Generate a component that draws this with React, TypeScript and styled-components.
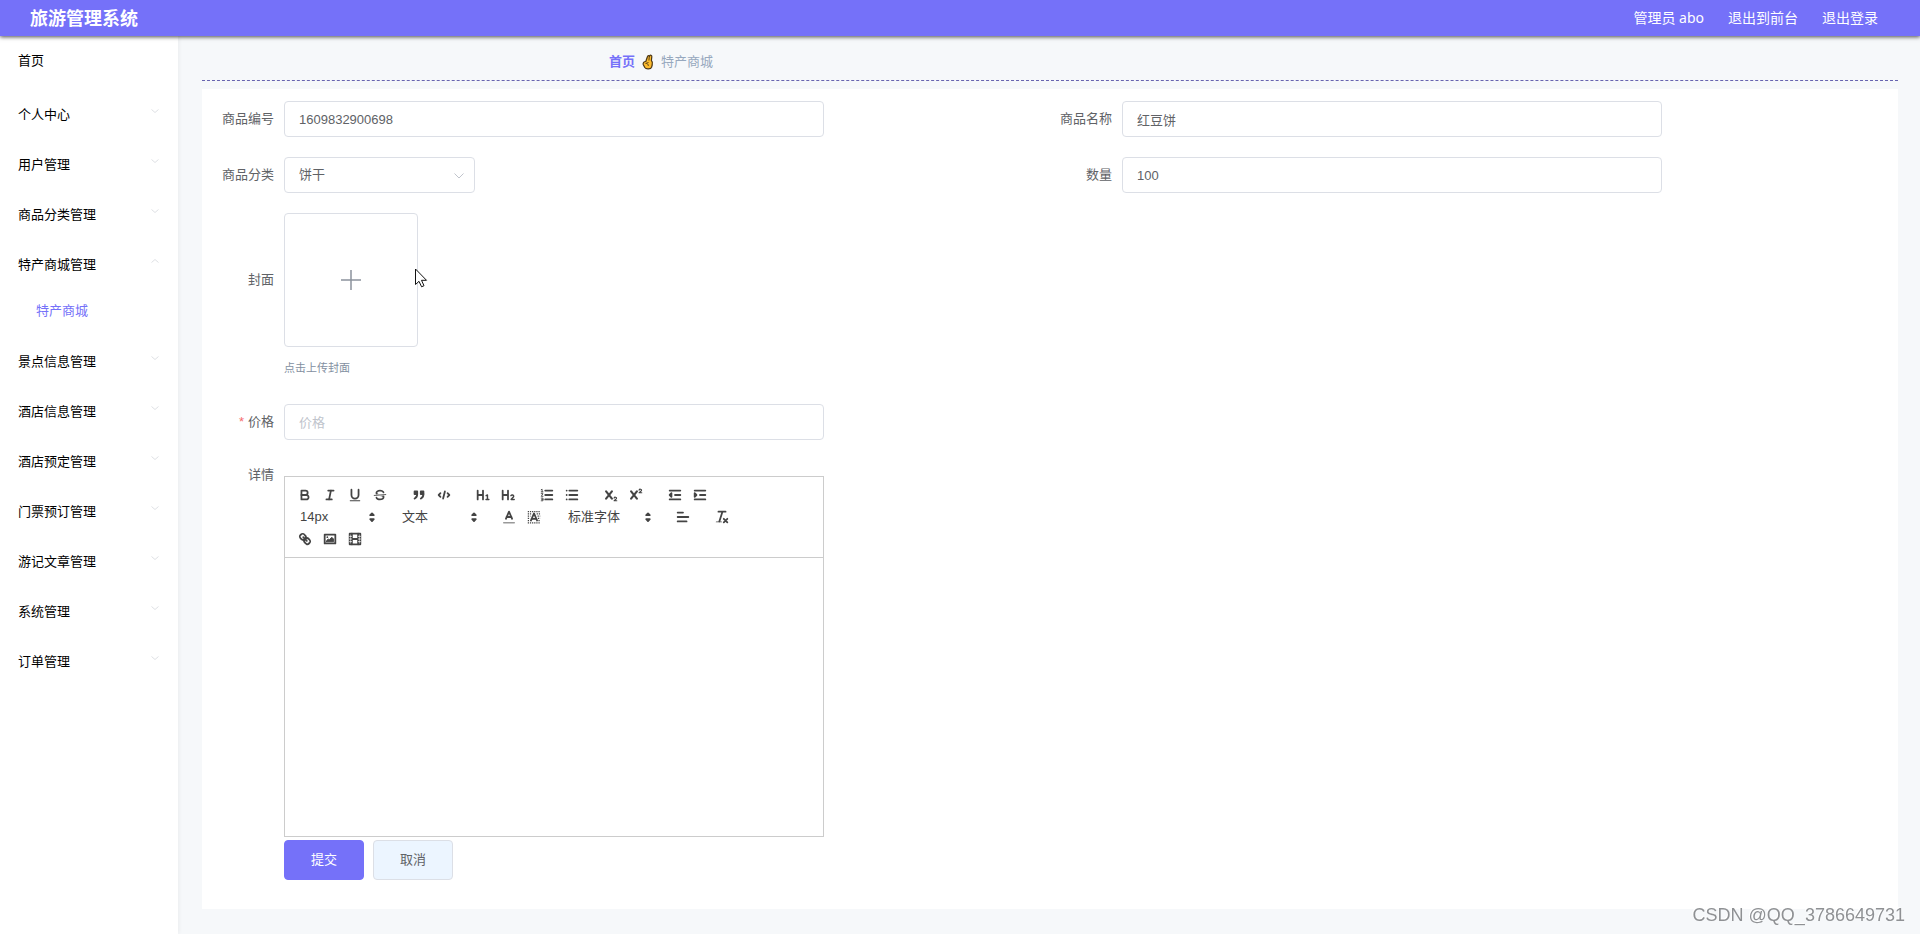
import React from 'react';
import styled, { createGlobalStyle } from 'styled-components';

const PRIMARY = '#7571f9';

const GlobalStyle = createGlobalStyle`
  *, *::before, *::after { box-sizing: border-box; }
  body {
    margin: 0;
    background: #f6f8fa;
    color: #606266;
    font: 13px/20px "Liberation Sans", "Noto Sans CJK SC", sans-serif;
  }
  button, input, select { font: inherit; color: inherit; }
`;

/* ---------- page frame ---------- */

const Page = styled.div`
  display: flex;
  flex-direction: column;
  min-height: 100vh;
`;

const Header = styled.header`
  position: relative;
  z-index: 1;
  display: flex;
  align-items: center;
  justify-content: space-between;
  height: 36px;
  padding: 0 42px 0 30px;
  background: ${PRIMARY};
  color: #fff;
  box-shadow: 0 1px 4px rgba(0, 0, 0, 0.7);
`;

const Brand = styled.h1`
  margin: 0;
  padding-top: 2px;
  font-size: 18px;
  line-height: 36px;
  font-weight: 700;
`;

const HeaderNav = styled.nav`
  display: flex;
  gap: 24px;
  font-family: "Noto Sans", "Noto Sans CJK SC", sans-serif;
  font-size: 14px;
  line-height: 36px;
`;

const HeaderLink = styled.a`
  color: #fff;
  text-decoration: none;
`;

const Body = styled.div`
  display: flex;
  flex: 1;
`;

const Sidebar = styled.nav`
  flex: 0 0 178px;
  background: #fff;
  box-shadow: 1px 0 4px rgba(0, 0, 0, 0.05);
`;

const Menu = styled.ul`
  margin: 0;
  padding: 0;
  list-style: none;
`;

const SubMenu = styled(Menu)`
  padding-bottom: 5px;
`;

const MenuItem = styled.li<{ $home?: boolean }>`
  margin-bottom: ${(p) => (p.$home ? 4 : 0)}px;
`;

const MenuRow = styled.a`
  display: flex;
  justify-content: space-between;
  height: 50px;
  padding: 0 18px;
  color: #000;
  line-height: 50px;
  text-decoration: none;
`;

const MenuArrow = styled.svg`
  margin-top: 16px;
`;

const SubMenuRow = styled.a`
  display: block;
  padding-left: 36px;
  line-height: 42px;
  color: ${PRIMARY};
  text-decoration: none;
`;

const Main = styled.main`
  flex: 1;
  min-width: 0;
  padding: 0 22px 25px 24px;
`;

const Breadcrumb = styled.nav`
  display: flex;
  align-items: center;
  gap: 7px;
  height: 45px;
  margin-bottom: 8px;
  padding: 8px 0 0 24%;
  border-bottom: 1px dashed #6864b0;
`;

const CrumbLink = styled.a`
  color: ${PRIMARY};
  font-weight: 700;
  text-decoration: none;
`;

const CrumbCurrent = styled.span`
  color: #97a8be;
`;

/* ---------- form ---------- */

const Card = styled.form`
  padding: 12px 10px 29px;
  background: #fff;
`;

const FieldGrid = styled.div`
  display: grid;
  grid-template-columns: 1fr 1fr;
  row-gap: 20px;
`;

const Field = styled.div<{ $wide?: boolean }>`
  display: flex;
  align-items: flex-start;
  grid-column: ${(p) => (p.$wide ? '1 / -1' : 'auto')};
`;

const FieldLabel = styled.label<{ $height?: number }>`
  flex: 0 0 72px;
  padding-right: 10px;
  text-align: right;
  line-height: ${(p) => p.$height ?? 36}px;
`;

const Required = styled.span`
  margin-right: 4px;
  color: #f56c6c;
`;

const Control = styled.div`
  flex: 0 1 540px;
  min-width: 0;
`;

const TextInput = styled.input`
  display: block;
  width: 100%;
  height: 36px;
  padding: 0 14px;
  border: 1px solid #dcdfe6;
  border-radius: 4px;
  background: #fff;
  outline: none;
  &::placeholder { color: #c0c4cc; opacity: 1; }
`;

const SelectWrap = styled.span<{ $width: number; $inset: number }>`
  display: inline-grid;
  align-items: center;
  width: ${(p) => p.$width}px;
  & > * { grid-area: 1 / 1; }
  & > svg {
    justify-self: end;
    margin-right: ${(p) => p.$inset}px;
    pointer-events: none;
  }
`;

const FormSelect = styled.select`
  appearance: none;
  width: 100%;
  height: 36px;
  padding: 0 14px;
  border: 1px solid #dcdfe6;
  border-radius: 4px;
  background: #fff;
  outline: none;
`;

const UploadBox = styled.label`
  position: relative;
  display: flex;
  align-items: center;
  justify-content: center;
  width: 134px;
  height: 134px;
  border: 1px solid #dcdfe6;
  border-radius: 4px;
  cursor: pointer;
`;

const FileInput = styled.input`
  position: absolute;
  width: 1px;
  height: 1px;
  opacity: 0;
`;

const Pointer = styled.svg`
  position: absolute;
  left: 129px;
  top: 54px;
`;

const UploadTip = styled.div`
  margin-top: 5px;
  color: #838fa1;
  font-size: 11px;
  line-height: 32px;
`;

const Actions = styled.div`
  display: flex;
  gap: 9px;
  margin-top: 3px;
  padding-left: 72px;
`;

const ActionButton = styled.button<{ $primary?: boolean }>`
  width: 80px;
  height: 40px;
  padding: 0;
  border: 1px solid ${(p) => (p.$primary ? PRIMARY : '#dcdfe6')};
  border-radius: 4px;
  background: ${(p) => (p.$primary ? PRIMARY : '#ecf5ff')};
  color: ${(p) => (p.$primary ? '#fff' : '#606266')};
`;

/* ---------- rich text editor ---------- */

const Editor = styled.div`
  margin-top: 16px;
  border: 1px solid #ccc;
`;

const Toolbar = styled.div`
  display: flex;
  flex-wrap: wrap;
  padding: 7px;
  border-bottom: 1px solid #ccc;
  color: #444;
`;

const ToolGroup = styled.span`
  display: flex;
  height: 22px;
  margin-right: 14px;
`;

const ToolButton = styled.button`
  display: flex;
  align-items: center;
  justify-content: center;
  width: 25px;
  height: 22px;
  padding: 0;
  border: 0;
  background: none;
`;

const ToolSelect = styled.select`
  appearance: none;
  width: 100%;
  height: 20px;
  padding: 0 8px;
  border: 0;
  background: none;
  outline: none;
`;

const EditorBody = styled.div`
  min-height: 278px;
  padding: 12px 15px;
  outline: none;
`;

const Watermark = styled.div`
  position: fixed;
  right: 15px;
  bottom: 5px;
  z-index: 2;
  color: #8f9194;
  font-size: 18px;
  line-height: 28px;
  text-shadow: -1px -1px 0 #fff;
`;

/* ---------- drawings ---------- */

const IconSvg = styled.svg`
  width: 16px;
  height: 16px;
  fill: none;
  stroke: #444;
  stroke-width: 2;
  stroke-linecap: round;
  stroke-linejoin: round;
  .thin { stroke-width: 1; }
  .fill { fill: #444; stroke: none; }
  .both { fill: #444; }
`;

const icons: Record<string, React.ReactNode> = {
  bold: (
    <>
      <path d="M5,4H9.5A2.5,2.5,0,0,1,12,6.500v0A2.500,2.500,0,0,1,9.500,9H5Z" />
      <path d="M5,9h5.500A2.500,2.500,0,0,1,13,11.500v0A2.500,2.500,0,0,1,10.500,14H5Z" />
    </>
  ),
  italic: (
    <>
      <line x1="7" x2="13" y1="4" y2="4" />
      <line x1="5" x2="11" y1="14" y2="14" />
      <line x1="8" x2="10" y1="14" y2="4" />
    </>
  ),
  underline: (
    <>
      <path d="M5,3V9a4.012,4.012,0,0,0,4,4H9a4.012,4.012,0,0,0,4-4V3" />
      <rect className="fill" height="1" rx="0.5" width="12" x="3" y="15" />
    </>
  ),
  strike: (
    <>
      <line className="thin" x1="15.5" x2="2.5" y1="8.500" y2="9.500" />
      <path className="fill" d="M9.007,8C6.542,7.791,6,7.519,6,6.500,6,5.792,7.283,5,9,5c1.571,0,2.765.679,2.969,1.309a1,1,0,0,0,1.900-.617C13.356,4.106,11.354,3,9,3,6.200,3,4,4.538,4,6.500a3.200,3.200,0,0,0,.5,1.843Z" />
      <path className="fill" d="M8.984,10C11.457,10.208,12,10.479,12,11.500c0,0.708-1.283,1.500-3,1.500-1.571,0-2.765-.679-2.969-1.309a1,1,0,1,0-1.900.617C4.644,13.894,6.646,15,9,15c2.800,0,5-1.538,5-3.500a3.200,3.200,0,0,0-.5-1.843Z" />
    </>
  ),
  quote: (
    <>
      <rect className="both" height="3" width="3" x="4" y="5" />
      <rect className="both" height="3" width="3" x="11" y="5" />
      <path className="both" d="M7,8c0,4.031-3,5-3,5" />
      <path className="both" d="M14,8c0,4.031-3,5-3,5" />
    </>
  ),
  code: (
    <>
      <polyline points="5 7 3 9 5 11" />
      <polyline points="13 7 15 9 13 11" />
      <line x1="10" x2="8" y1="5" y2="13" />
    </>
  ),
  h1: (
    <>
      <path d="M3,4V14M9,4V14M3,9H9" />
      <path strokeWidth="1.600" d="M12.500,9.700L14,9V14M12.400,14H15.600" />
    </>
  ),
  h2: (
    <>
      <path d="M3,4V14M9,4V14M3,9H9" />
      <path strokeWidth="1.600" d="M12.300,9.800C13,8.600,15.600,8.800,15.400,10.500C15.200,12,13,12.600,12.500,14H16" />
    </>
  ),
  ordered: (
    <>
      <path d="M7,4H15M7,9H15M7,14H15" />
      <path className="thin" d="M2.500,5.500H4.500M3.500,5.500V2.500L2.500,3M2.500,7.500H4.500L2.500,10.500H4.500M2.500,12.500H4.500V15.500H2.500M3,14H4.500" />
    </>
  ),
  bullet: (
    <path d="M6,4H15M6,9H15M6,14H15M3,4V4M3,9V9M3,14V14" />
  ),
  sub: (
    <>
      <path strokeWidth="2.400" d="M3.500,5L10,13M10,5L3.500,13" />
      <path strokeWidth="1.300" d="M12.500,12.500C12.800,11,15.500,11.200,15.200,12.800C15,14,13,14.500,12.500,15.500H15.500" />
    </>
  ),
  sup: (
    <>
      <path strokeWidth="2.400" d="M3.500,5L10,13M10,5L3.500,13" />
      <path strokeWidth="1.300" d="M12.500,3.500C12.800,2,15.500,2.200,15.200,3.800C15,5,13,5.500,12.500,6.500H15.500" />
    </>
  ),
  outdent: (
    <>
      <path d="M3,14H15M3,4H15M9,9H15" />
      <polyline className="both" points="5 7 5 11 3 9 5 7" />
    </>
  ),
  indent: (
    <>
      <path d="M3,14H15M3,4H15M9,9H15" />
      <polyline className="both" points="3 7 3 11 5 9 3 7" />
    </>
  ),
  color: (
    <>
      <line stroke="#999" x1="3" x2="15" y1="15.500" y2="15.500" strokeWidth="1.500" />
      <polyline points="5.500 11 9 3 12.500 11" />
      <line x1="11.630" x2="6.380" y1="9" y2="9" />
    </>
  ),
  background: (
    <>
      <path strokeWidth="1.400" strokeDasharray="1.400 1" strokeLinecap="butt" d="M2,3H16M2,5.500H6M12,5.500H16M2,8H5M13,8H16M2,10.500H4.500M13.500,10.500H16M2,13H4M14,13H16M2,15.500H16" />
      <polyline points="5.500 13 9 5 12.500 13" />
      <line x1="11.630" x2="6.380" y1="11" y2="11" />
    </>
  ),
  align: <path d="M3,9H15M3,14H13M3,4H9" />,
  clean: (
    <>
      <path d="M5,3H13M6,14L9.500,3M11,11L15,15M15,11L11,15" />
      <rect className="fill" height="1" rx="0.5" width="7" x="2" y="14" />
    </>
  ),
  link: (
    <>
      <line x1="7" x2="11" y1="7" y2="11" />
      <path d="M8.900,4.577a3.476,3.476,0,0,1,.36,4.679A3.476,3.476,0,0,1,4.577,8.900C3.185,7.500,2.035,6.400,4.217,4.217S7.500,3.185,8.900,4.577Z" />
      <path d="M13.423,9.100a3.476,3.476,0,0,0-4.679-.36,3.476,3.476,0,0,0,.36,4.679c1.392,1.392,2.500,2.542,4.679.36S14.815,10.500,13.423,9.100Z" />
    </>
  ),
  image: (
    <>
      <rect height="10" width="12" x="3" y="4" />
      <circle className="fill" cx="6" cy="7" r="1" />
      <polyline className="both" strokeWidth="1" points="5 12 5 11 7 9 8 10 11 7 13 9 13 12 5 12" />
    </>
  ),
  video: (
    <>
      <rect height="12" width="12" x="3" y="3" />
      <path d="M5.500,3V15M12.500,3V15M6,9H12" />
      <path className="thin" d="M3,6H5M3,9H5M3,12H5M13,6H15M13,9H15M13,12H15" stroke="#fff" />
    </>
  ),
};

const ToolIcon = ({ name, label }: { name: string; label: string }) => (
  <ToolButton type="button" aria-label={label}>
    <IconSvg viewBox="0 0 18 18">{icons[name]}</IconSvg>
  </ToolButton>
);

const Picker = ({ label, value, width }: { label: string; value: string; width: number }) => (
  <SelectWrap $width={width} $inset={0}>
    <ToolSelect aria-label={label} defaultValue={value}>
      <option>{value}</option>
    </ToolSelect>
    <IconSvg viewBox="0 0 18 18">
      <polygon className="both" points="7 11.500 9 13.500 11 11.500" />
      <polygon className="both" points="7 7 9 5 11 7" />
    </IconSvg>
  </SelectWrap>
);

const HandIcon = () => (
  <svg width="12" height="16" viewBox="0 0 12 16" aria-hidden="true">
    <path
      d="M3.800 7.500L5.500 2.500C5.800 1.200 7.300 1.200 7.300 2.400L7.800 1.800C8.300.8 10 1.200 9.800 2.600L9.400 6.500C10.600 7.500 10.600 9 10.200 11L9.600 13.200C8.800 15.200 4 15.400 2.800 13.500L1.200 10.500C.8 8.800 2 7.500 3.800 7.500Z"
      fill="#fdbb2d"
      stroke="#4a3513"
      strokeWidth="1.200"
      strokeLinejoin="round"
    />
    <path d="M7.300 2.500L6.900 6.500M3.500 9.500L6.500 8.500M4.500 9.500C6 10 6.500 11 6.200 12" fill="none" stroke="#4a3513" strokeWidth="0.900" />
  </svg>
);

const menu: { title: string; children?: string[] }[] = [
  { title: '个人中心' },
  { title: '用户管理' },
  { title: '商品分类管理' },
  { title: '特产商城管理', children: ['特产商城'] },
  { title: '景点信息管理' },
  { title: '酒店信息管理' },
  { title: '酒店预定管理' },
  { title: '门票预订管理' },
  { title: '游记文章管理' },
  { title: '系统管理' },
  { title: '订单管理' },
];

const formatTools: [string, string][][] = [
  [['bold', '加粗'], ['italic', '斜体'], ['underline', '下划线'], ['strike', '删除线']],
  [['quote', '引用'], ['code', '代码']],
  [['h1', '标题一'], ['h2', '标题二']],
  [['ordered', '有序列表'], ['bullet', '无序列表']],
  [['sub', '下标'], ['sup', '上标']],
  [['outdent', '减少缩进'], ['indent', '增加缩进']],
];

const Tools = ({ items }: { items: [string, string][] }) => (
  <ToolGroup>
    {items.map(([name, label]) => (
      <ToolIcon key={name} name={name} label={label} />
    ))}
  </ToolGroup>
);

export default function App() {
  return (
    <Page>
      <GlobalStyle />
      <Header>
        <Brand>旅游管理系统</Brand>
        <HeaderNav>
          <HeaderLink href="#admin">管理员 abo</HeaderLink>
          <HeaderLink href="#front">退出到前台</HeaderLink>
          <HeaderLink href="#logout">退出登录</HeaderLink>
        </HeaderNav>
      </Header>
      <Body>
        <Sidebar>
          <Menu>
            <MenuItem $home>
              <MenuRow href="#home">首页</MenuRow>
            </MenuItem>
            {menu.map((m) => (
              <MenuItem key={m.title}>
                <MenuRow href="#menu">
                  {m.title}
                  <MenuArrow width="10" height="10" viewBox="0 0 10 10" fill="none" stroke="#dfe1e5">
                    <path d={m.children ? 'M1.500 6.500L5 3.500L8.500 6.500' : 'M1.500 3.500L5 6.500L8.500 3.500'} />
                  </MenuArrow>
                </MenuRow>
                {m.children && (
                  <SubMenu>
                    {m.children.map((c) => (
                      <li key={c}>
                        <SubMenuRow href="#mall">{c}</SubMenuRow>
                      </li>
                    ))}
                  </SubMenu>
                )}
              </MenuItem>
            ))}
          </Menu>
        </Sidebar>
        <Main>
          <Breadcrumb>
            <CrumbLink href="#home">首页</CrumbLink>
            <HandIcon />
            <CrumbCurrent>特产商城</CrumbCurrent>
          </Breadcrumb>
          <Card onSubmit={(e) => e.preventDefault()}>
            <FieldGrid>
              <Field>
                <FieldLabel htmlFor="code">商品编号</FieldLabel>
                <Control>
                  <TextInput id="code" defaultValue="1609832900698" />
                </Control>
              </Field>
              <Field>
                <FieldLabel htmlFor="name">商品名称</FieldLabel>
                <Control>
                  <TextInput id="name" defaultValue="红豆饼" />
                </Control>
              </Field>
              <Field>
                <FieldLabel htmlFor="category">商品分类</FieldLabel>
                <SelectWrap $width={191} $inset={10}>
                  <FormSelect id="category" defaultValue="饼干">
                    <option>饼干</option>
                  </FormSelect>
                  <svg width="12" height="12" viewBox="0 0 12 12" fill="none" stroke="#c0c4cc">
                    <path d="M1.500 4.500L6 9L10.500 4.500" />
                  </svg>
                </SelectWrap>
              </Field>
              <Field>
                <FieldLabel htmlFor="amount">数量</FieldLabel>
                <Control>
                  <TextInput id="amount" defaultValue="100" />
                </Control>
              </Field>
              <Field $wide>
                <FieldLabel htmlFor="cover" $height={134}>封面</FieldLabel>
                <Control>
                  <UploadBox>
                    <FileInput id="cover" type="file" aria-label="封面" />
                    <svg width="22" height="22" viewBox="0 0 22 22" stroke="#8c939d" strokeWidth="1.500">
                      <path d="M11 1V21M1 11H21" />
                    </svg>
                    <Pointer width="14" height="20" viewBox="0 0 14 20" aria-hidden="true">
                      <path
                        d="M1.500 1V16.500L5 13.300L7.600 18.800L10 17.700L7.500 12.300H12.500Z"
                        fill="#fff"
                        stroke="#111"
                      />
                    </Pointer>
                  </UploadBox>
                  <UploadTip>点击上传封面</UploadTip>
                </Control>
              </Field>
              <Field $wide>
                <FieldLabel htmlFor="price">
                  <Required>*</Required>价格
                </FieldLabel>
                <Control>
                  <TextInput id="price" placeholder="价格" />
                </Control>
              </Field>
              <Field $wide>
                <FieldLabel as="span" id="detail-label" $height={30}>详情</FieldLabel>
                <Control>
                  <Editor>
                    <Toolbar>
                      {formatTools.map((items) => (
                        <Tools key={items[0][0]} items={items} />
                      ))}
                      <ToolGroup>
                        <Picker label="字号" value="14px" width={88} />
                      </ToolGroup>
                      <ToolGroup>
                        <Picker label="标题" value="文本" width={88} />
                      </ToolGroup>
                      <Tools items={[['color', '文字颜色'], ['background', '背景颜色']]} />
                      <ToolGroup>
                        <Picker label="字体" value="标准字体" width={96} />
                      </ToolGroup>
                      <Tools items={[['align', '对齐']]} />
                      <Tools items={[['clean', '清除格式']]} />
                      <Tools items={[['link', '链接'], ['image', '图片'], ['video', '视频']]} />
                    </Toolbar>
                    <EditorBody
                      contentEditable
                      suppressContentEditableWarning
                      role="textbox"
                      aria-multiline="true"
                      aria-labelledby="detail-label"
                    />
                  </Editor>
                </Control>
              </Field>
            </FieldGrid>
            <Actions>
              <ActionButton type="submit" $primary>提交</ActionButton>
              <ActionButton type="button">取消</ActionButton>
            </Actions>
          </Card>
        </Main>
      </Body>
      <Watermark>CSDN @QQ_3786649731</Watermark>
    </Page>
  );
}
